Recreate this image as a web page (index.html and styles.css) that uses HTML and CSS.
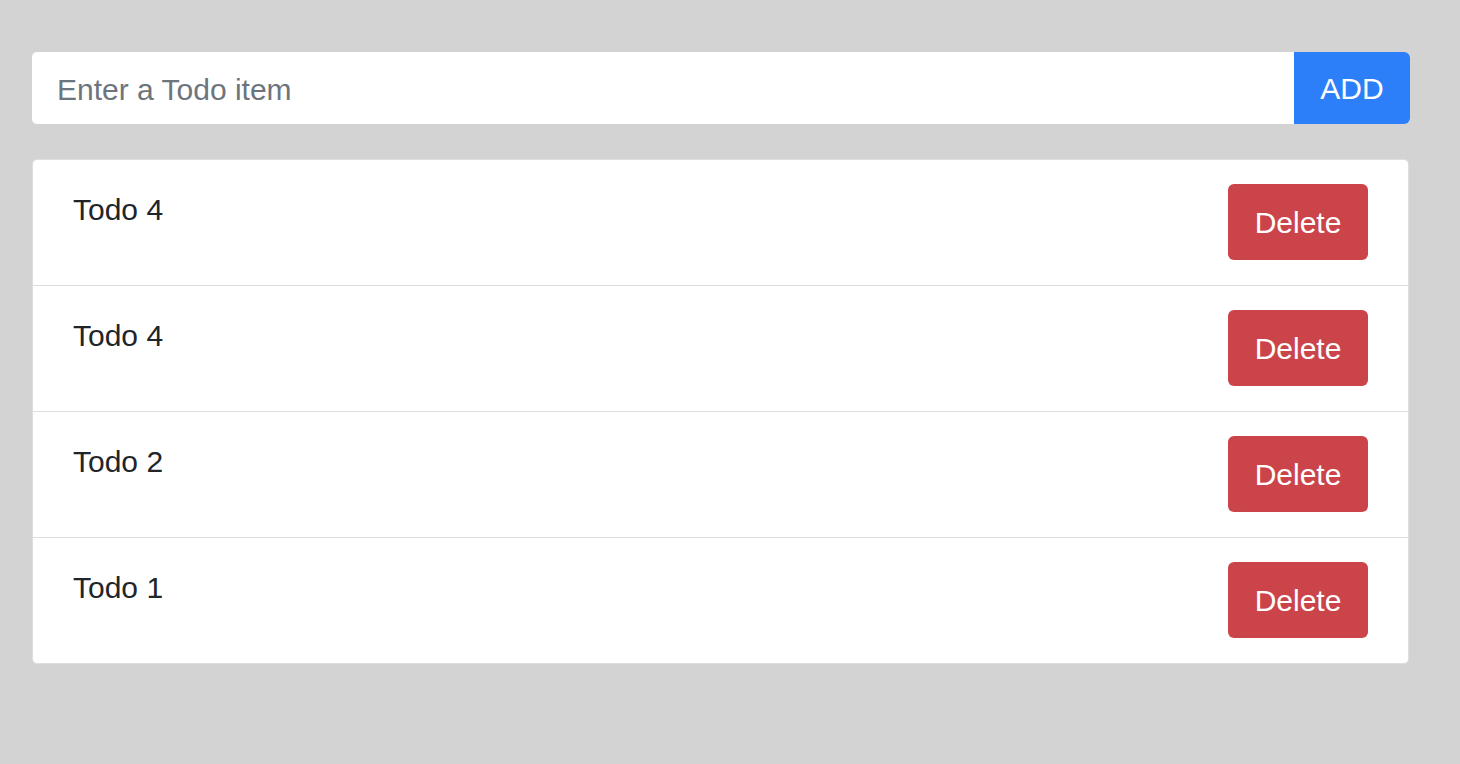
FILE: index.html
```html
<!DOCTYPE html>
<html lang="en">
<head>
<meta charset="utf-8">
<title>Todo</title>
<link rel="stylesheet" href="styles.css">
</head>
<body>
<div class="app">
  <form class="add-form" onsubmit="return false">
    <input class="add-input" type="text" placeholder="Enter a Todo item">
    <button class="add-btn" type="submit">ADD</button>
  </form>
  <ul class="todo-list">
    <li class="todo-item"><span class="todo-text">Todo 4</span><button class="del-btn">Delete</button></li>
    <li class="todo-item"><span class="todo-text">Todo 4</span><button class="del-btn">Delete</button></li>
    <li class="todo-item"><span class="todo-text">Todo 2</span><button class="del-btn">Delete</button></li>
    <li class="todo-item"><span class="todo-text">Todo 1</span><button class="del-btn">Delete</button></li>
  </ul>
</div>
</body>
</html>
```

FILE: styles.css
```css
* { box-sizing: border-box; }
html, body {
  margin: 0;
  padding: 0;
  background: #d3d3d3;
  font-family: "Liberation Sans", Arial, Helvetica, sans-serif;
}
.app {
  padding: 52px 50px 0 32px;
}
.add-form {
  display: flex;
  height: 72px;
  margin: 0;
}
.add-input {
  flex: 1;
  height: 72px;
  border: none;
  border-radius: 5px 0 0 5px;
  background: #fff;
  padding: 3px 25px 0 25px;
  font-family: inherit;
  font-size: 30px;
  color: #495057;
  outline: none;
}
.add-input::placeholder { color: #6c757d; }
.add-btn {
  width: 116px;
  height: 72px;
  border: none;
  border-radius: 0 6px 6px 0;
  background: #2d7ff9;
  color: #fff;
  font-family: inherit;
  font-size: 30px;
  padding: 2px 0 0 0;
  cursor: pointer;
}
.todo-list {
  list-style: none;
  margin: 35px 1px 0 0;
  padding: 0;
  background: #fff;
  border: 1px solid #dedede;
  border-radius: 5px;
}
.todo-item {
  display: flex;
  justify-content: space-between;
  align-items: flex-start;
  padding: 24px 40px 25px 40px;
  border-top: 1px solid #dedede;
}
.todo-item:first-child { border-top: none; }
.todo-text {
  font-size: 30px;
  line-height: 45px;
  color: #212529;
  margin-top: 3px;
}
.del-btn {
  width: 140px;
  height: 76px;
  border: none;
  border-radius: 6px;
  background: #cb444a;
  color: #fff;
  font-family: inherit;
  font-size: 30px;
  padding: 2px 0 0 0;
  cursor: pointer;
}
```
